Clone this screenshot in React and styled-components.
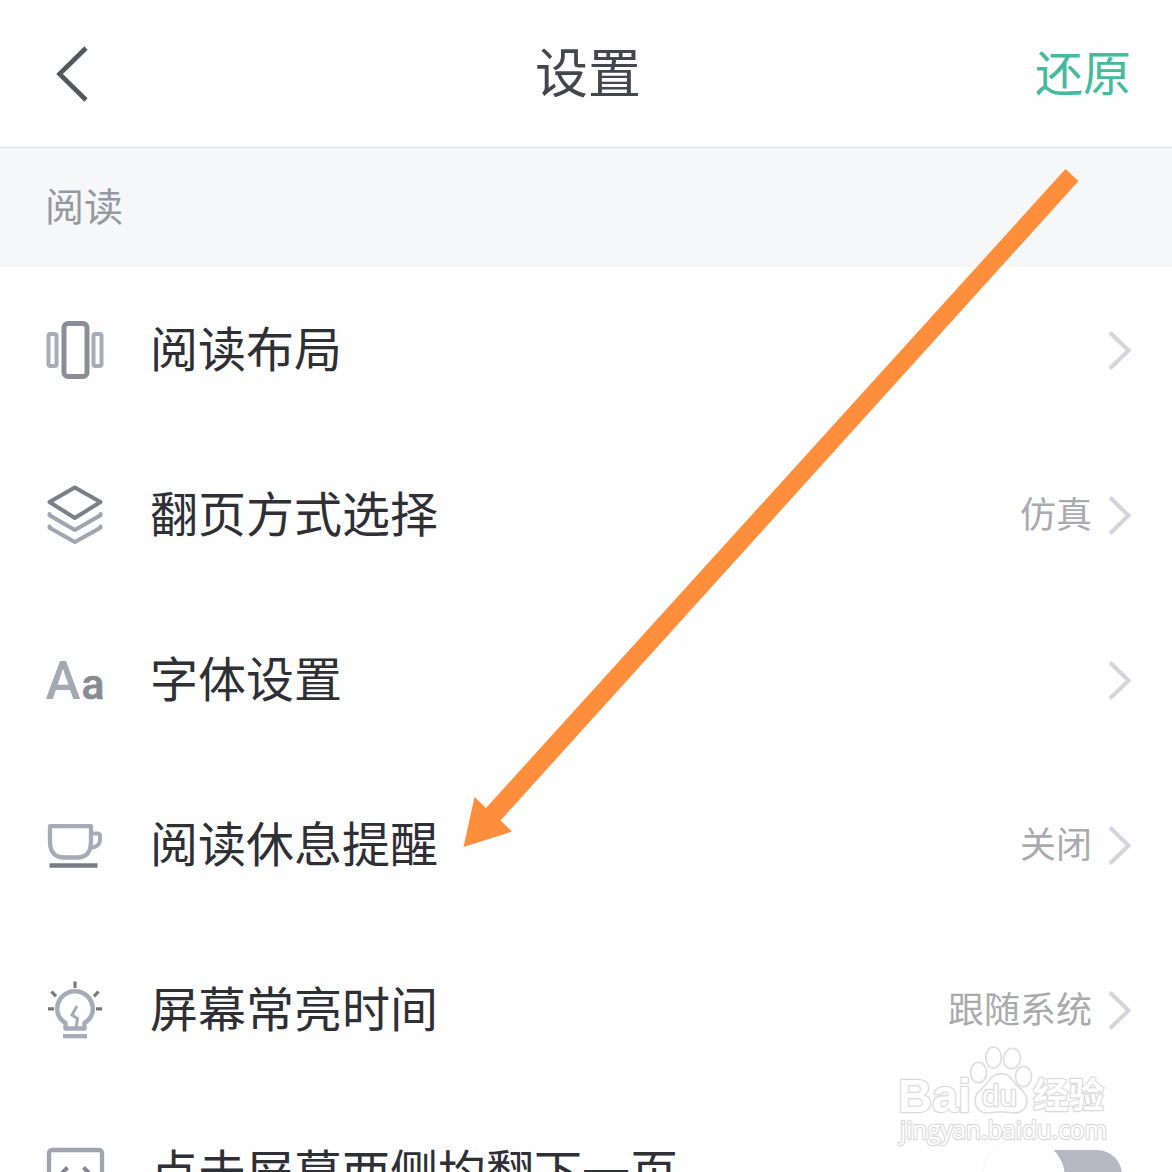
import React from 'react';
import styled, { createGlobalStyle } from 'styled-components';

const GlobalStyle = createGlobalStyle`
  * { box-sizing: border-box; }
  body { margin: 0; background: #fefefe; }
`;

const Screen = styled.main`
  position: relative;
  display: flex;
  flex-direction: column;
  width: 100%;
  height: 100vh;
  overflow: hidden;
  background: #fefefe;
  color: #2f2f36;
  font-family: 'Noto Sans CJK SC', sans-serif;
`;

const Header = styled.header`
  flex: none;
  display: grid;
  grid-template-columns: 1fr auto 1fr;
  align-items: center;
  height: 148px;
  padding: 0 42px 0 56px;
  border-bottom: 1px solid #dedfe1;
`;

const BackButton = styled.button`
  justify-self: start;
  display: flex;
  margin-left: -1px;
  padding: 0;
  border: 0;
  background: none;
`;

const Title = styled.h1`
  margin: 0 10px 0 0;
  padding-bottom: 8px;
  font-size: 53px;
  line-height: 60px;
  font-weight: 400;
  color: #45454d;
`;

const ResetButton = styled.button`
  justify-self: end;
  margin-right: -1px;
  padding: 0 0 8px;
  border: 0;
  background: none;
  font: 400 48px/60px 'Noto Sans CJK SC', sans-serif;
  color: #43bb9c;
`;

const SectionTitle = styled.h2`
  flex: none;
  display: flex;
  align-items: center;
  height: 119px;
  margin: 0;
  padding: 0 45px 7px;
  background: #f5f7f8;
  font-size: 39px;
  font-weight: 400;
  color: #98999e;
`;

const List = styled.ul`
  flex: none;
  margin: 0;
  padding: 0;
  list-style: none;
`;

const Row = styled.li`
  display: flex;
  align-items: center;
  height: 165px;
  padding: 0 40px 0 45px;
`;

const IconSlot = styled.span`
  flex: none;
  display: flex;
  width: 105px;
`;

const Label = styled.span`
  flex: 1;
  padding-bottom: ${({ $raised }) => ($raised ? 11 : 8)}px;
  font-size: 48px;
  line-height: 60px;
  white-space: nowrap;
`;

const Value = styled.span`
  margin-right: 16px;
  padding-bottom: 5px;
  font-size: 36px;
  line-height: 48px;
  color: #aaaaac;
`;

const Track = styled.span`
  position: relative;
  width: 120px;
  height: 50px;
  margin-right: 10px;
  border-radius: 25px;
  background: #b7b8c3;
`;

const Thumb = styled.span`
  position: absolute;
  left: -19px;
  top: -13px;
  width: 82px;
  height: 82px;
  border-radius: 50%;
  background: #fefefe;
  box-shadow: 0 0 4px rgba(0, 0, 0, 0.04);
`;

const ArrowOverlay = styled.svg`
  position: absolute;
  left: 460px;
  top: 165px;
  pointer-events: none;
`;

const WatermarkOverlay = styled.svg`
  position: absolute;
  left: 890px;
  top: 1040px;
  pointer-events: none;
`;

const GlyphSvg = styled.svg`
  width: 60px;
  height: 60px;
  overflow: visible;
`;

const Glyph = ({ children }) => (
  <GlyphSvg viewBox="0 0 60 60" fill="none">{children}</GlyphSvg>
);

const LayoutIcon = () => (
  <Glyph>
    <rect x="19" y="3.5" width="23" height="53" rx="4" stroke="#898d98" strokeWidth="5" />
    <rect x="3.5" y="14" width="8" height="32" rx="2" stroke="#a7abb8" strokeWidth="4" />
    <rect x="48.5" y="14" width="8" height="32" rx="2" stroke="#a7abb8" strokeWidth="4" />
  </Glyph>
);

const LayersIcon = () => (
  <Glyph>
    <g strokeWidth="4" strokeLinecap="round" strokeLinejoin="round">
      <path d="M4.500 41.500v1.200L29.800 57 55.500 42.700v-1.200" stroke="#a1a3ae" />
      <path d="M4.500 29v1.200L29.800 45 55.500 30.200V29" stroke="#a1a3ae" />
      <path d="M29.800 2.500 55.500 17 29.800 33 4.500 17Z" stroke="#7c7e88" />
    </g>
  </Glyph>
);

const FontIcon = () => (
  <Glyph>
    <text x="0.500" y="49" fontFamily="Roboto, sans-serif" fontSize="54" fontWeight="500" textLength="35" lengthAdjust="spacingAndGlyphs" fill="#a4a8b5">A</text>
    <text x="36.500" y="49" fontFamily="Roboto, sans-serif" fontSize="43" fontWeight="500" textLength="23" lengthAdjust="spacingAndGlyphs" fill="#888a95" stroke="#888a95" strokeWidth="0.600">a</text>
  </Glyph>
);

const CupIcon = () => (
  <Glyph>
    <path d="M5 11.200h41v15C46 38 41 42.500 32 42.500H19C10 42.500 5 37 5 27Z" stroke="#a7abb8" strokeWidth="4.300" strokeLinejoin="round" />
    <path d="M47 18.500h5.500q2.500 0 2.500 2.500v4q0 6.500-9.500 8" stroke="#a7abb8" strokeWidth="4" />
    <path d="M4.500 50.500h48" stroke="#787a84" strokeWidth="4.300" />
  </Glyph>
);

const BulbIcon = () => (
  <Glyph>
    <path d="M20.500 48.500v-5.500C15 39.500 12.200 35.500 12.200 29a17.800 17.800 0 1 1 35.600 0c0 6.500-2.800 10.500-8.300 14v5.500Z" stroke="#a7abb8" strokeWidth="4.500" strokeLinejoin="round" />
    <path d="m32 26-5 9 5.500 3.500L31 48" stroke="#a7abb8" strokeWidth="3" />
    <path d="M18 56.200h24" stroke="#a7abb8" strokeWidth="4.300" />
    <path d="M30 1.500V8M3 28.800h6M51 28.800h6M6.500 11.500l4.500 4.800M53.500 11.500 49 16.300" stroke="#797977" strokeWidth="3.200" />
  </Glyph>
);

const TapSidesIcon = () => (
  <Glyph>
    <rect x="4" y="5" width="53" height="50" rx="3" stroke="#a1a4af" strokeWidth="4.300" />
    <path d="m22.500 22.500-9 9 9 9M38.500 22.500l9 9-9 9" stroke="#85868d" strokeWidth="4" />
  </Glyph>
);

const Chevron = () => (
  <svg width="24" height="42" viewBox="0 0 24 42" fill="none">
    <path d="M2 3.500 20.500 21.500 2 39.500" stroke="#d4d4da" strokeWidth="4" />
  </svg>
);

const Toggle = () => (
  <Track><Thumb /></Track>
);

const PointerArrow = () => (
  <ArrowOverlay width="622" height="686" viewBox="460 165 622 686">
    <path d="M1065.500 169 1078.500 181 500.500 820.500 512 831.500 463.500 847 474.500 797 486 808Z" fill="#fe8e3c" />
  </ArrowOverlay>
);

const Watermark = () => (
  <WatermarkOverlay width="230" height="116" viewBox="890 1040 230 116">
    <g fill="#fefefe" stroke="#dcdcdc" strokeWidth="1.600">
      <ellipse cx="978.500" cy="1072.500" rx="8" ry="10.200" />
      <ellipse cx="993.500" cy="1057.500" rx="7.800" ry="10.500" />
      <ellipse cx="1012" cy="1058.500" rx="8.500" ry="10.300" transform="rotate(10 1012 1058.500)" />
      <ellipse cx="1023.500" cy="1076.500" rx="8" ry="10.200" />
      <path d="M1001 1073.500c-8 0-11 6-15 11s-11 8-11 16c0 9 7 13 14 12.500 5-.4 8-1.300 12-1.300s8 1.300 13 1.300c8 0 13-5 13-12 0-8-6-11-11-16.500s-7-11-15-11Z" />
    </g>
    <g fill="#fefefe" stroke="#dadada" strokeWidth="2.400" paintOrder="stroke" strokeLinejoin="round">
      <text x="898" y="1112" fontFamily="'Liberation Sans', sans-serif" fontWeight="700" fontSize="47" textLength="73" lengthAdjust="spacingAndGlyphs">Bai</text>
      <text x="982" y="1106" fontFamily="'Liberation Sans', sans-serif" fontSize="29" textLength="35" lengthAdjust="spacingAndGlyphs">du</text>
      <text x="1033" y="1108" fontFamily="'Noto Sans CJK SC', sans-serif" fontWeight="700" fontSize="35.500" textLength="71">经验</text>
      <text x="900" y="1139" fontFamily="'Open Sans', sans-serif" fontSize="25" textLength="207" lengthAdjust="spacingAndGlyphs">jingyan.baidu.com</text>
    </g>
  </WatermarkOverlay>
);

const settings = [
  { label: '阅读布局', Icon: LayoutIcon },
  { label: '翻页方式选择', Icon: LayersIcon, value: '仿真' },
  { label: '字体设置', Icon: FontIcon },
  { label: '阅读休息提醒', Icon: CupIcon, value: '关闭' },
  { label: '屏幕常亮时间', Icon: BulbIcon, value: '跟随系统' },
  { label: '点击屏幕两侧均翻下一页', Icon: TapSidesIcon, toggle: true },
];

export default function App() {
  return (
    <>
      <GlobalStyle />
      <Screen>
        <Header>
          <BackButton aria-label="返回">
            <svg width="34" height="58" viewBox="0 0 34 58" fill="none">
              <path d="M31 3 4.500 29 31 55" stroke="#54575d" strokeWidth="4.600" />
            </svg>
          </BackButton>
          <Title>设置</Title>
          <ResetButton>还原</ResetButton>
        </Header>
        <SectionTitle>阅读</SectionTitle>
        <List>
          {settings.map(({ label, Icon, value, toggle }) => (
            <Row key={label}>
              <IconSlot><Icon /></IconSlot>
              <Label $raised={toggle}>{label}</Label>
              {value && <Value>{value}</Value>}
              {toggle ? <Toggle /> : <Chevron />}
            </Row>
          ))}
        </List>
        <PointerArrow />
        <Watermark />
      </Screen>
    </>
  );
}
